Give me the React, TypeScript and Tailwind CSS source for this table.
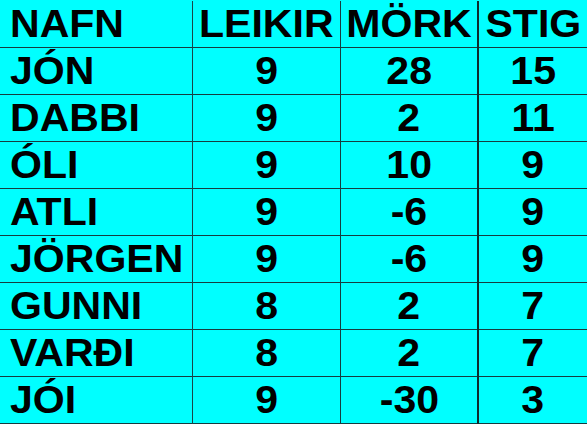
const rows: [string, string, string, string][] = [
  ["JÓN", "9", "28", "15"],
  ["DABBI", "9", "2", "11"],
  ["ÓLI", "9", "10", "9"],
  ["ATLI", "9", "-6", "9"],
  ["JÖRGEN", "9", "-6", "9"],
  ["GUNNI", "8", "2", "7"],
  ["VARÐI", "8", "2", "7"],
  ["JÓI", "9", "-30", "3"],
];

function Row({ cells }: { cells: [string, string, string, string] }) {
  return (
    <div className="grid grid-cols-[193px_148px_138px_108px] h-[47px] border-b border-[#163c40]">
      <div className="pl-[10px] border-r border-[#1b4448] overflow-hidden whitespace-nowrap">
        <span className="inline-block origin-left scale-x-[1.08]">{cells[0]}</span>
      </div>
      <div className="text-center border-r border-[#163c40]">
        <span className="inline-block scale-x-[1.08]">{cells[1]}</span>
      </div>
      <div className="text-center border-r-2 border-[#0e2a2c]">
        <span className="inline-block scale-x-[1.08]">{cells[2]}</span>
      </div>
      <div className="text-center">
        <span className="inline-block scale-x-[1.08]">{cells[3]}</span>
      </div>
    </div>
  );
}

export default function App() {
  return (
    <div
      className="w-[587px] h-[424px] overflow-hidden bg-[#00ffff] pt-[1px] text-black font-bold text-[38px] leading-[47px]"
      style={{ fontFamily: '"Liberation Sans", Arial, sans-serif' }}
    >
      <Row cells={["NAFN", "LEIKIR", "MÖRK", "STIG"]} />
      {rows.map((r) => (
        <Row key={r[0]} cells={r} />
      ))}
    </div>
  );
}
